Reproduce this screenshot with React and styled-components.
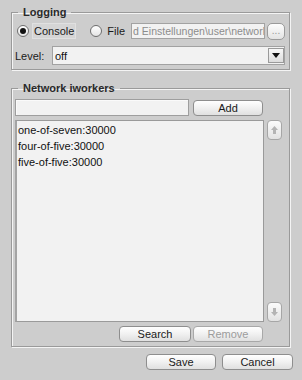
import React from 'react';
import styled, { createGlobalStyle } from 'styled-components';

const GlobalStyle = createGlobalStyle`
  html, body {
    margin: 0;
    padding: 0;
    background: #cdcdcd;
  }
  body {
    font-family: "Liberation Sans", Arial, sans-serif;
    font-size: 11px;
    color: #1a1a1a;
  }
`;

const Page = styled.div`
  width: 302px;
  height: 380px;
  box-sizing: border-box;
  padding-top: 5px;
  display: flex;
  flex-direction: column;
  background: #cdcdcd;
`;

const Group = styled.fieldset`
  margin: ${(p) => (p.$first ? '0' : '11px')} 12px 0 11px;
  padding: 4px 4px 4px 3px;
  min-width: 0;
  border: 1px solid #9a9a9a;
  box-shadow: inset 1px 1px 0 #f4f4f4, 1px 1px 0 #f4f4f4;
  display: flex;
  flex-direction: column;
  gap: ${(p) => p.$gap || 0}px;
`;

const Legend = styled.legend`
  margin-left: 3px;
  padding: 0 5px;
  font-weight: bold;
  font-size: 11px;
  line-height: 14px;
  color: #2a2a2a;
`;

const Row = styled.div`
  display: flex;
  align-items: center;
  height: ${(p) => p.$h}px;
  margin-left: ${(p) => p.$ml || 0}px;
  margin-right: ${(p) => p.$mr || 0}px;
  gap: ${(p) => p.$gap || 0}px;
  justify-content: ${(p) => p.$justify || 'flex-start'};
`;

const RadioCircle = styled.span`
  width: 12px;
  height: 12px;
  box-sizing: border-box;
  border-radius: 50%;
  border: 1px solid #6e6e6e;
  background: linear-gradient(#ffffff, #e4e4e4);
  display: flex;
  align-items: center;
  justify-content: center;
  flex: none;

  &::after {
    content: '';
    width: 6px;
    height: 6px;
    border-radius: 50%;
    background: ${(p) => (p.$on ? '#111' : 'transparent')};
  }
`;

const RadioLabel = styled.span`
  height: 16px;
  line-height: 14px;
  box-sizing: border-box;
  padding: 0 1px;
  margin-left: ${(p) => p.$gap}px;
  border: 1px solid ${(p) => (p.$focus ? '#e0e0e0' : 'transparent')};
  background: ${(p) => (p.$focus ? '#d5d5d5' : 'transparent')};
  font-size: 11px;
  color: #1a1a1a;
`;

const PathField = styled.div`
  flex: 1;
  min-width: 0;
  height: 16px;
  margin-left: 4px;
  padding-left: 1px;
  box-sizing: border-box;
  border: 1px solid #a2a2a2;
  background: #f2f2f2;
  overflow: hidden;
  white-space: nowrap;
  line-height: 14px;
  font-size: 10.5px;
  color: #8c8c8c;
`;

const DotsButton = styled.button`
  width: 18px;
  height: 17px;
  margin-left: 2px;
  padding: 0 0 3px;
  box-sizing: border-box;
  border: 1px solid #9a9a9a;
  border-radius: 5px;
  background: linear-gradient(#fdfdfd, #e3e3e3);
  font-family: "Liberation Sans", Arial, sans-serif;
  font-size: 10px;
  color: #999;
  display: flex;
  align-items: flex-end;
  justify-content: center;
  line-height: 10px;
`;

const FieldLabel = styled.span`
  width: 37px;
  flex: none;
  color: #1a1a1a;
`;

const Combo = styled.div`
  flex: 1;
  height: 19px;
  box-sizing: border-box;
  border: 1px solid #a2a2a2;
  background: #f2f2f2;
  display: flex;
  align-items: center;
  padding: 1px 0 1px 2px;
`;

const ComboValue = styled.span`
  flex: 1;
  color: #111;
`;

const ComboArrow = styled.span`
  width: 16px;
  height: 15px;
  box-sizing: border-box;
  border: 1px solid #9a9a9a;
  background: linear-gradient(#f8f8f8, #dcdcdc);
  display: flex;
  align-items: center;
  justify-content: center;
`;

const TextInput = styled.div`
  flex: 1;
  height: 17px;
  box-sizing: border-box;
  border: 1px solid #9e9e9e;
  box-shadow: inset 1px 1px 0 #fafafa;
  background: #f2f2f2;
`;

const Button = styled.button`
  width: ${(p) => p.$w || 70}px;
  height: 16px;
  padding: 0;
  box-sizing: border-box;
  border: 1px solid ${(p) => (p.disabled ? '#a8a8a8' : '#8e8e8e')};
  border-radius: 4px;
  background: linear-gradient(#ffffff 0%, #f2f2f2 45%, #e0e0e0 100%);
  font-family: "Liberation Sans", Arial, sans-serif;
  font-size: 11px;
  line-height: 14px;
  color: ${(p) => (p.disabled ? '#9c9c9c' : '#1a1a1a')};
  flex: none;
`;

const ListArea = styled.div`
  display: flex;
  height: 202px;
  margin-right: 3px;
  gap: 3px;
`;

const List = styled.div`
  flex: 1;
  box-sizing: border-box;
  border: 1px solid #9a9a9a;
  border-left: 2px solid #a4a4a4;
  background: #f2f2f2;
  padding: 1px 0 0 1px;
`;

const ListItem = styled.div`
  height: 16px;
  line-height: 16px;
  color: #111;
`;

const ScrollColumn = styled.div`
  width: 15px;
  display: flex;
  flex-direction: column;
  justify-content: space-between;
`;

const ScrollButton = styled.span`
  height: 20px;
  box-sizing: border-box;
  border: 1px solid #a6a6a6;
  border-radius: 4px;
  background: linear-gradient(#fbfbfb, #e2e2e2);
  display: flex;
  align-items: center;
  justify-content: center;
`;

const Footer = styled.div`
  display: flex;
  justify-content: flex-end;
  gap: 6px;
  margin-top: 7px;
  padding-right: 9px;
`;

function Arrow({ down }) {
  return (
    <svg width="9" height="10" viewBox="0 0 9 10" style={down ? { transform: 'rotate(180deg)' } : null}>
      <path d="M4.5 1 L8 5 H6 V9 H3 V5 H1 Z" fill="#b4b4b4" />
    </svg>
  );
}

const workers = ['one-of-seven:30000', 'four-of-five:30000', 'five-of-five:30000'];

export default function App() {
  return (
    <Page>
      <GlobalStyle />
      <Group $first $gap={7}>
        <Legend>Logging</Legend>
        <Row $h={16} $ml={2}>
          <RadioCircle $on />
          <RadioLabel $gap={3} $focus>Console</RadioLabel>
          <span style={{ width: 14 }} />
          <RadioCircle />
          <RadioLabel $gap={3}>File</RadioLabel>
          <PathField>d Einstellungen\user\network</PathField>
          <DotsButton>...</DotsButton>
        </Row>
        <Row $h={19}>
          <FieldLabel>Level:</FieldLabel>
          <Combo>
            <ComboValue>off</ComboValue>
            <ComboArrow>
              <svg width="8" height="5" viewBox="0 0 8 5">
                <path d="M0 0 H8 L4 5 Z" fill="#111" />
              </svg>
            </ComboArrow>
          </Combo>
        </Row>
      </Group>

      <Group $gap={4}>
        <Legend>Network iworkers</Legend>
        <Row $h={17} $mr={22} $gap={4}>
          <TextInput />
          <Button>Add</Button>
        </Row>
        <ListArea>
          <List>
            {workers.map((w) => (
              <ListItem key={w}>{w}</ListItem>
            ))}
          </List>
          <ScrollColumn>
            <ScrollButton><Arrow /></ScrollButton>
            <ScrollButton><Arrow down /></ScrollButton>
          </ScrollColumn>
        </ListArea>
        <Row $h={16} $mr={22} $gap={2} $justify="flex-end">
          <Button $w={72}>Search</Button>
          <Button disabled>Remove</Button>
        </Row>
      </Group>

      <Footer>
        <Button>Save</Button>
        <Button $w={71}>Cancel</Button>
      </Footer>
    </Page>
  );
}
